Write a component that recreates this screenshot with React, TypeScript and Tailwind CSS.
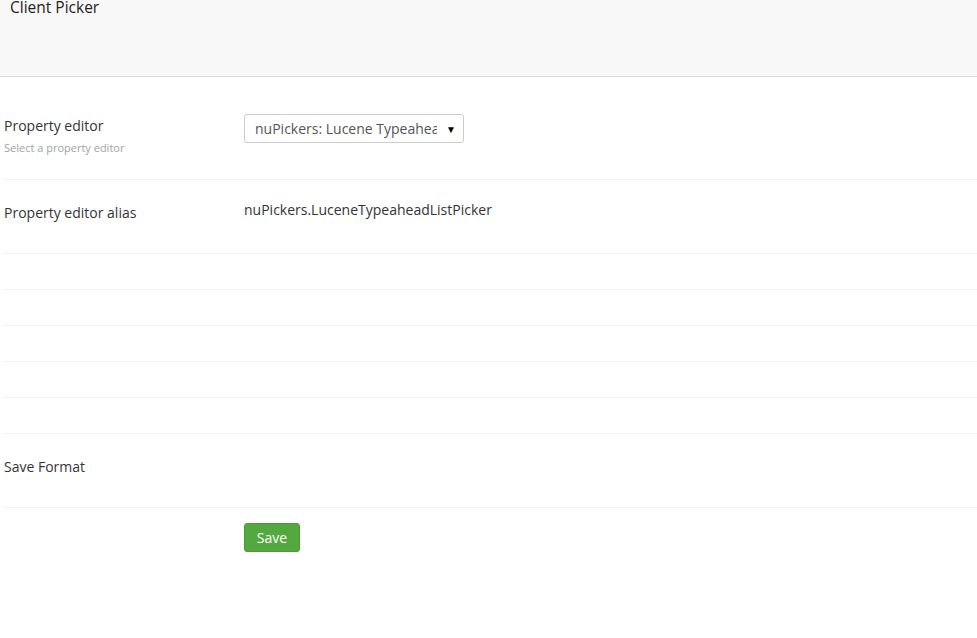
const font = { fontFamily: '"Open Sans", "Liberation Sans", sans-serif' };

function Row({ label, description, height, labelTop, children }: {
  label?: string;
  description?: string;
  height: string;
  labelTop?: string;
  children?: React.ReactNode;
}) {
  return (
    <div className={`ml-[3px] flex border-b border-[#f3f3f3] ${height}`}>
      <div className={`w-[241px] shrink-0 pl-[1px] ${labelTop ?? ''}`}>
        {label && <div className="text-[14px] leading-[20px] text-[#343434]">{label}</div>}
        {description && <div className="mt-[4px] text-[11px] leading-[15px] text-[#a2a2a2]">{description}</div>}
      </div>
      <div className="flex-1">{children}</div>
    </div>
  );
}

export default function App() {
  return (
    <div className="min-h-[638px] w-full bg-white" style={font}>
      <div className="h-[77px] border-b border-[#dadada] bg-[#f8f8f8] pl-[10px]">
        <div className="text-[15.5px] leading-[14px] text-[#222]">Client Picker</div>
      </div>

      <Row label="Property editor" description="Select a property editor" height="h-[103px]" labelTop="pt-[39px]">
        <div className="mt-[37px] flex h-[29px] w-[220px] items-center rounded-[3px] border border-[#cccccc] bg-white pl-[10px] pr-[7px]">
          <span className="w-[182px] overflow-hidden whitespace-nowrap text-[14px] text-[#555]">
            nuPickers: Lucene Typeahead List Picker
          </span>
          <span className="ml-auto text-[10px] leading-none text-black">▼</span>
        </div>
      </Row>

      <Row label="Property editor alias" height="h-[74px]" labelTop="pt-[23px]">
        <div className="pt-[20px] text-[14px] leading-[20px] text-[#333]">nuPickers.LuceneTypeaheadListPicker</div>
      </Row>

      <Row height="h-[36px]" />
      <Row height="h-[36px]" />
      <Row height="h-[36px]" />
      <Row height="h-[36px]" />
      <Row height="h-[36px]" />

      <Row label="Save Format" height="h-[74px]" labelTop="pt-[23px]" />

      <div className="pl-[244px] pt-[15px]">
        <button className="h-[29px] w-[56px] rounded-[3px] border border-[#4a9a37] bg-[#53a93f] text-[14px] text-white">
          Save
        </button>
      </div>
    </div>
  );
}
